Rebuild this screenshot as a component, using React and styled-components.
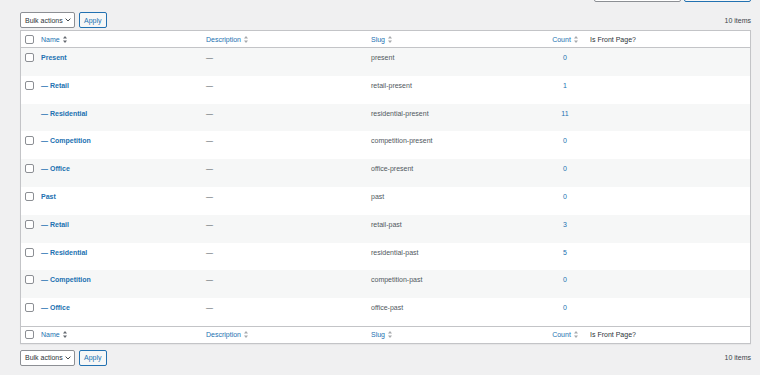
import React from "react";
import styled, { createGlobalStyle } from "styled-components";

const GlobalStyle = createGlobalStyle`
  html, body {
    margin: 0;
    padding: 0;
    background: #f0f0f1;
  }
  body {
    font-family: "Liberation Sans", Arial, sans-serif;
    font-size: 7px;
    color: #3c434a;
  }
`;

const Wrap = styled.div`
  padding: 0 9px 0 20px;
`;

const SearchBox = styled.div`
  display: flex;
  justify-content: flex-end;
  gap: 3px;
  height: 16px;
  margin-top: -14px;
`;

const SearchInput = styled.div`
  width: 85px;
  border: 1px solid #8c8f94;
  border-radius: 2px;
  background: #fff;
`;

const SearchButton = styled.div`
  width: 65px;
  border: 1px solid #2271b1;
  border-radius: 2px;
  background: #f6f7f7;
`;

const TableNav = styled.div`
  display: flex;
  align-items: center;
  gap: 4px;
  height: 16px;
  margin: ${(p) => (p.$bottom ? "6px 0 0" : "10px 0 2px")};
  white-space: nowrap;
`;

const Select = styled.div`
  box-sizing: border-box;
  display: flex;
  align-items: center;
  justify-content: space-between;
  width: 55px;
  height: 16px;
  padding: 0 3px 0 4px;
  border: 1px solid #8c8f94;
  border-radius: 2px;
  background: #fff;
  color: #2c3338;
`;

const Button = styled.div`
  box-sizing: border-box;
  display: flex;
  align-items: center;
  height: 16px;
  padding: 0 4px;
  border: 1px solid #2271b1;
  border-radius: 2px;
  background: #f6f7f7;
  color: #2271b1;
`;

const Count = styled.div`
  margin-left: auto;
  color: #3c434a;
`;

const Table = styled.table`
  width: 100%;
  table-layout: fixed;
  border-spacing: 0;
  background: #fff;
  border: 1px solid #c3c4c7;
  box-shadow: 0 1px 1px rgba(0, 0, 0, 0.04);
`;

const Th = styled.th`
  box-sizing: border-box;
  height: 17px;
  width: ${(p) => p.$w || "auto"};
  padding: 0 4px 0 ${(p) => p.$pl || "4px"};
  text-align: ${(p) => (p.$center ? "center" : "left")};
  font-weight: 400;
  vertical-align: middle;
  color: ${(p) => (p.$plain ? "#2c3338" : "#2271b1")};
  border-bottom: ${(p) => (p.$foot ? "0" : "1px solid #c3c4c7")};
  border-top: ${(p) => (p.$foot ? "1px solid #c3c4c7" : "0")};
`;

const SortWrap = styled.span`
  display: inline-flex;
  align-items: center;
  gap: 3px;
`;

const Row = styled.tr`
  height: 27.8px;
  background: ${(p) => (p.$alt ? "#f6f7f7" : "#fff")};
`;

const Td = styled.td`
  vertical-align: top;
  padding: 5px ${(p) => (p.$check ? "0" : "4px")} 0 4px;
  line-height: 9px;
  text-align: ${(p) => (p.$center ? "center" : "left")};
  color: #50575e;
  white-space: nowrap;
`;

const Box = styled.span`
  display: block;
  box-sizing: border-box;
  width: 9px;
  height: 9px;
  border: 1px solid #8c8f94;
  border-radius: 2px;
  background: #fff;
`;

const NameLink = styled.a`
  color: #2271b1;
  font-weight: 700;
  text-decoration: none;
`;

const CountLink = styled.a`
  color: #2271b1;
  text-decoration: none;
`;

const SortIcon = ({ dark }) => (
  <svg width="4" height="7" viewBox="0 0 4 7">
    <path d="M2 0 L4 2.6 L0 2.6 Z" fill={dark ? "#646970" : "#a7aaad"} />
    <path d="M2 7 L4 4.4 L0 4.4 Z" fill={dark ? "#646970" : "#a7aaad"} />
  </svg>
);

const Chevron = () => (
  <svg width="6" height="4" viewBox="0 0 6 4">
    <polyline points="0.6,0.6 3,3 5.4,0.6" fill="none" stroke="#2c3338" strokeWidth="0.9" />
  </svg>
);

const rows = [
  { name: "Present", slug: "present", count: 0 },
  { name: "— Retail", slug: "retail-present", count: 1 },
  { name: "— Residential", slug: "residential-present", count: 11, noCheck: true },
  { name: "— Competition", slug: "competition-present", count: 0 },
  { name: "— Office", slug: "office-present", count: 0 },
  { name: "Past", slug: "past", count: 0 },
  { name: "— Retail", slug: "retail-past", count: 3 },
  { name: "— Residential", slug: "residential-past", count: 5 },
  { name: "— Competition", slug: "competition-past", count: 0 },
  { name: "— Office", slug: "office-past", count: 0 },
];

const Nav = ({ bottom }) => (
  <TableNav $bottom={bottom}>
    <Select>
      <span>Bulk actions</span>
      <Chevron />
    </Select>
    <Button>Apply</Button>
    <Count>10 items</Count>
  </TableNav>
);

const HeadRow = ({ foot }) => (
  <tr>
    <Th $w="16px" $foot={foot}>
      <Box />
    </Th>
    <Th $w="165px" $foot={foot}>
      <SortWrap>
        Name <SortIcon dark />
      </SortWrap>
    </Th>
    <Th $w="165px" $foot={foot}>
      <SortWrap>
        Description <SortIcon />
      </SortWrap>
    </Th>
    <Th $w="178px" $foot={foot}>
      <SortWrap>
        Slug <SortIcon />
      </SortWrap>
    </Th>
    <Th $w="40px" $center $foot={foot}>
      <SortWrap>
        Count <SortIcon />
      </SortWrap>
    </Th>
    <Th $plain $pl="5px" $foot={foot}>
      Is Front Page?
    </Th>
  </tr>
);

export default function App() {
  return (
    <Wrap>
      <GlobalStyle />
      <SearchBox>
        <SearchInput />
        <SearchButton />
      </SearchBox>
      <Nav />
      <Table>
        <thead>
          <HeadRow />
        </thead>
        <tbody>
          {rows.map((r, i) => (
            <Row key={i} $alt={i % 2 === 0}>
              <Td $check>{!r.noCheck && <Box />}</Td>
              <Td>
                <NameLink href="#">{r.name}</NameLink>
              </Td>
              <Td>—</Td>
              <Td>{r.slug}</Td>
              <Td $center>
                <CountLink href="#">{r.count}</CountLink>
              </Td>
              <Td />
            </Row>
          ))}
        </tbody>
        <tfoot>
          <HeadRow foot />
        </tfoot>
      </Table>
      <Nav bottom />
    </Wrap>
  );
}
